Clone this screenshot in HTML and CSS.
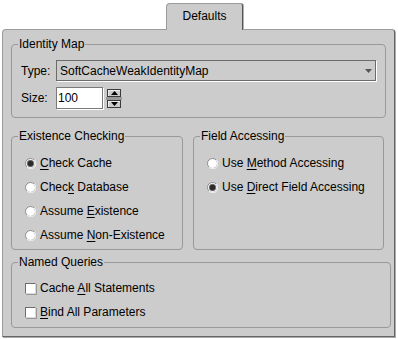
FILE: index.html
```html
<!DOCTYPE html>
<html>
<head>
<meta charset="utf-8">
<title>Defaults</title>
<link rel="stylesheet" href="styles.css">
</head>
<body>
<div class="tabbar">
  <div class="tab">Defaults</div>
</div>
<div class="panel">
  <fieldset class="group identity">
    <legend>Identity Map</legend>
    <div class="form">
      <span class="lbl">Type:</span>
      <div class="combo">
        <span>SoftCacheWeakIdentityMap</span>
        <svg class="arrow" width="7" height="4" viewBox="0 0 7 4"><path d="M0 0H7L3.5 4Z" fill="#555"/></svg>
      </div>
      <span class="lbl">Size:</span>
      <div class="sizebox">
        <div class="field">100</div>
        <div class="spin">
          <div class="spinbtn"><svg width="7" height="4" viewBox="0 0 7 4"><path d="M0 4H7L3.5 0Z" fill="#000"/></svg></div>
          <div class="spinbar"></div>
          <div class="spinbtn"><svg width="7" height="4" viewBox="0 0 7 4"><path d="M0 0H7L3.5 4Z" fill="#000"/></svg></div>
        </div>
      </div>
    </div>
  </fieldset>

  <div class="checks">
    <fieldset class="group existence">
      <legend>Existence Checking</legend>
      <div class="options">
        <div class="opt">
          <svg class="radio" width="11" height="11" viewBox="0 0 11 11"><circle cx="5.5" cy="5.5" r="5" fill="#fff" stroke="#8a8a8a"/><path d="M2 9.3A5 5 0 0 0 9.3 2" fill="none" stroke="#fff"/><circle cx="5.5" cy="5.5" r="3.2" fill="#2a2a2a" stroke="#666" stroke-width="0.8"/></svg>
          <span><u>C</u>heck Cache</span>
        </div>
        <div class="opt">
          <svg class="radio" width="11" height="11" viewBox="0 0 11 11"><circle cx="5.5" cy="5.5" r="5" fill="#fff" stroke="#8a8a8a"/><path d="M2 9.3A5 5 0 0 0 9.3 2" fill="none" stroke="#fff"/></svg>
          <span>Chec<u>k</u> Database</span>
        </div>
        <div class="opt">
          <svg class="radio" width="11" height="11" viewBox="0 0 11 11"><circle cx="5.5" cy="5.5" r="5" fill="#fff" stroke="#8a8a8a"/><path d="M2 9.3A5 5 0 0 0 9.3 2" fill="none" stroke="#fff"/></svg>
          <span>Assume <u>E</u>xistence</span>
        </div>
        <div class="opt">
          <svg class="radio" width="11" height="11" viewBox="0 0 11 11"><circle cx="5.5" cy="5.5" r="5" fill="#fff" stroke="#8a8a8a"/><path d="M2 9.3A5 5 0 0 0 9.3 2" fill="none" stroke="#fff"/></svg>
          <span>Assume <u>N</u>on-Existence</span>
        </div>
      </div>
    </fieldset>
    <fieldset class="group access">
      <legend>Field Accessing</legend>
      <div class="options">
        <div class="opt">
          <svg class="radio" width="11" height="11" viewBox="0 0 11 11"><circle cx="5.5" cy="5.5" r="5" fill="#fff" stroke="#8a8a8a"/><path d="M2 9.3A5 5 0 0 0 9.3 2" fill="none" stroke="#fff"/></svg>
          <span>Use <u>M</u>ethod Accessing</span>
        </div>
        <div class="opt">
          <svg class="radio" width="11" height="11" viewBox="0 0 11 11"><circle cx="5.5" cy="5.5" r="5" fill="#fff" stroke="#8a8a8a"/><path d="M2 9.3A5 5 0 0 0 9.3 2" fill="none" stroke="#fff"/><circle cx="5.5" cy="5.5" r="3.2" fill="#2a2a2a" stroke="#666" stroke-width="0.8"/></svg>
          <span>Use <u>D</u>irect Field Accessing</span>
        </div>
      </div>
    </fieldset>
  </div>

  <fieldset class="group named">
    <legend>Named Queries</legend>
    <div class="options">
      <div class="opt"><span class="checkbox"></span><span>Cache <u>A</u>ll Statements</span></div>
      <div class="opt"><span class="checkbox"></span><span><u>B</u>ind All Parameters</span></div>
    </div>
  </fieldset>
</div>
</body>
</html>
```

FILE: styles.css
```css
* { box-sizing: border-box; }
html, body { margin: 0; padding: 0; }
body {
  background: #fff;
  font: 12px "Liberation Sans", Arial, sans-serif;
  color: #000;
  width: 398px;
  height: 339px;
  overflow: hidden;
}
u { text-decoration: underline; text-underline-offset: 2px; }

.tabbar {
  height: 29px;
  display: flex;
  padding-left: 166px;
}
.tab {
  margin-top: 3px;
  margin-bottom: -1px;
  width: 77px;
  height: 27px;
  background: #ccc;
  border: 1px solid #9c9c9c;
  border-bottom: 0;
  border-right-color: #555;
  border-radius: 4px 3px 0 0;
  box-shadow: 1px 0 0 #b0b0b0;
  text-align: center;
  line-height: 24px;
  position: relative;
  z-index: 1;
}

.panel {
  margin-left: 2px;
  width: 393px;
  height: 308px;
  background: #ccc;
  border: 1px solid;
  border-color: #9c9c9c #666 #666 #9c9c9c;
  border-radius: 4px 3px 0 0;
  box-shadow: 1px 1px 0 #aaa;
  padding: 7px 0 0 8px;
}

.group {
  margin: 0;
  padding: 0;
  border: 1px solid #999;
  border-radius: 4px;
  min-width: 0;
}
.group legend {
  margin-left: 6px;
  padding: 0 1px;
  line-height: 14px;
}

.identity { width: 375px; }
.form {
  display: grid;
  grid-template-columns: 35px auto;
  row-gap: 6px;
  align-items: center;
  justify-items: start;
  padding: 9px 0 8px 9px;
}
.combo {
  width: 320px;
  height: 21px;
  display: flex;
  align-items: center;
  justify-content: space-between;
  padding: 0 3px;
  border: 1px solid #6b6b6b;
  box-shadow: 1px 1px 0 #fff;
}
.sizebox { display: flex; align-items: center; }
.field {
  width: 47px;
  height: 22px;
  background: #fff;
  border: 1px solid #7a7a7a;
  box-shadow: 1px 1px 0 #fff;
  padding-left: 1px;
  line-height: 20px;
}
.spin {
  margin-left: 3px;
  display: flex;
  flex-direction: column;
  align-items: center;
}
.spinbtn {
  width: 14px;
  height: 8px;
  background: #ccc;
  border: 1px solid #3a3a3a;
  box-shadow: inset 1px 1px 0 #eee;
  display: flex;
  align-items: center;
  justify-content: center;
}
.spinbtn svg { display: block; }
.spinbar { width: 16px; height: 3px; background: #999; }

.checks {
  display: flex;
  gap: 10px;
  margin-top: 11px;
}
.existence { width: 172px; }
.access { width: 191px; }
.options { padding: 8px 0 2px 13px; }
.opt {
  height: 24px;
  display: flex;
  align-items: center;
  gap: 4px;
  white-space: nowrap;
}
.radio { display: block; flex: none; }

.named { width: 380px; margin-top: 5px; }
.named .options { padding: 7px 0 3px 13px; }
.checkbox {
  width: 11px;
  height: 11px;
  flex: none;
  background: #fff;
  border: 1px solid;
  border-color: #6e6e6e #d8d8d8 #d8d8d8 #6e6e6e;
  box-shadow: 1px 1px 0 #999;
}
```
